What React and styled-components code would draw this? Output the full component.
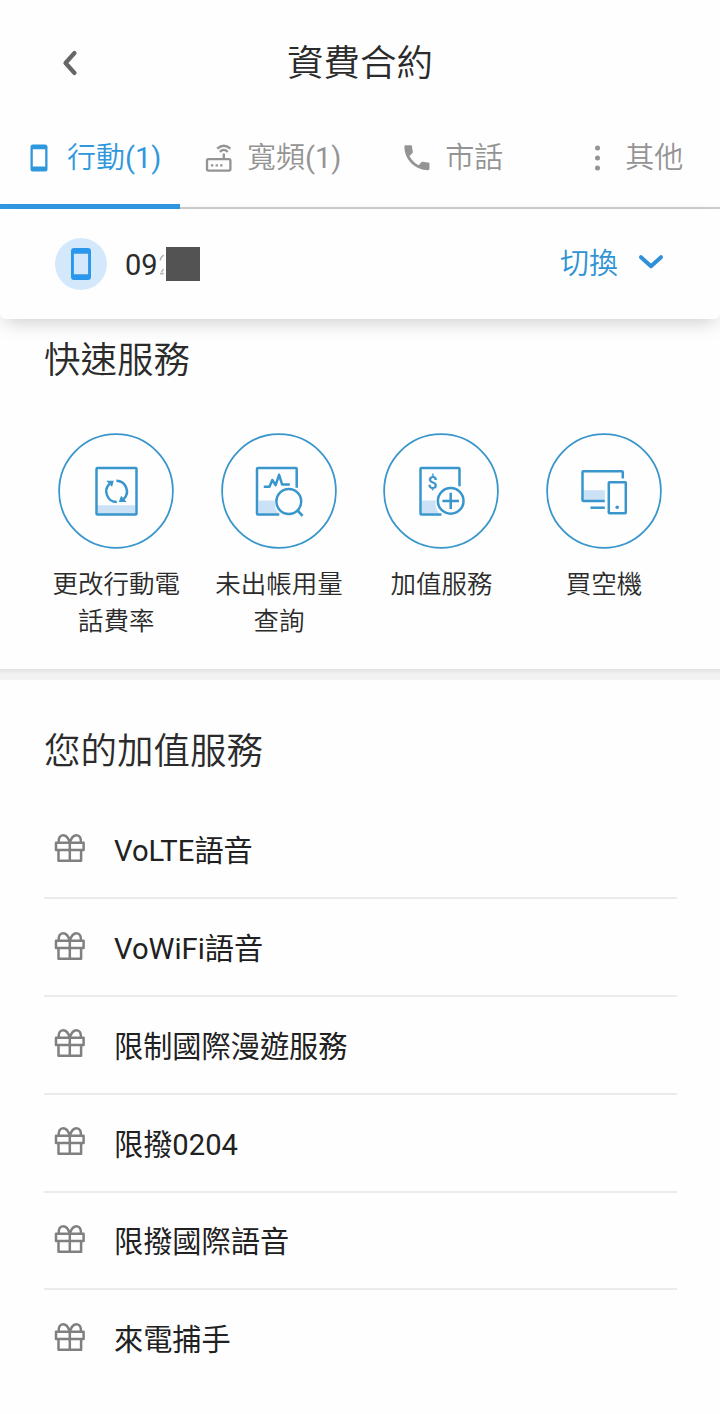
import React, { useState } from "react";
import styled, { createGlobalStyle } from "styled-components";

const GlobalStyle = createGlobalStyle`
  * {
    box-sizing: border-box;
  }

  body {
    margin: 0;
    background: #fefefe;
    color: #2b2b2b;
    font-family: Roboto, "Noto Sans CJK TC", sans-serif;
  }

  button {
    margin: 0;
    padding: 0;
    border: none;
    background: none;
    color: inherit;
    font: inherit;
  }

  svg {
    display: block;
    flex: none;
  }
`;

const Page = styled.div`
  width: 720px;
  height: 1414px;
  overflow: hidden;
`;

const Header = styled.header`
  display: grid;
  grid-template-columns: 140px 1fr 140px;
  align-items: center;
  height: 126px;
`;

const BackButton = styled.button`
  display: flex;
  justify-content: center;
`;

const Title = styled.h1`
  margin: 0;
  padding-top: 2px;
  font-size: 36.5px;
  font-weight: 350;
  line-height: 54px;
  text-align: center;
`;

const Tabs = styled.nav`
  display: flex;
  height: 83px;
  border-bottom: 2px solid #cecece;
`;

const Tab = styled.button`
  display: flex;
  align-items: center;
  justify-content: center;
  gap: 9.5px;
  width: 180px;
  height: 83px;
  padding: 0 0 15px 1px;
  font-size: 29px;
  font-weight: 350;
  line-height: 40px;
  white-space: nowrap;
  color: ${(props) => (props.$active ? "#2f97dc" : "#949494")};
  border-bottom: 5px solid
    ${(props) => (props.$active ? "#3197e2" : "transparent")};
`;

const Count = styled.span`
  font-weight: 400;
`;

const AccountBar = styled.div`
  position: relative;
  z-index: 1;
  display: flex;
  align-items: center;
  height: 110px;
  padding: 0 55px;
  background: #fefefe;
  border-radius: 0 0 6px 6px;
  box-shadow: 0 7px 20px -5px rgba(0, 0, 0, 0.22);
`;

const Avatar = styled.div`
  display: flex;
  align-items: center;
  justify-content: center;
  width: 52px;
  height: 52px;
  margin-right: 18px;
  border-radius: 50%;
  background: #d3e9fb;
`;

const Number = styled.div`
  display: flex;
  align-items: center;
  padding-top: 2px;
  font-size: 29px;
  line-height: 40px;
`;

const Mask = styled.span`
  width: 34px;
  height: 34px;
  margin-top: -2px;
  background: #535353;
`;

const SwitchButton = styled.button`
  display: flex;
  align-items: center;
  gap: 19px;
  margin-left: auto;
  color: #2f93d4;
  font-size: 29px;
  font-weight: 350;
  line-height: 40px;

  svg {
    margin-top: -4px;
  }
`;

const QuickSection = styled.section`
  height: 350px;
  padding: 15px 35px 0;
`;

const SectionTitle = styled.h2`
  margin: 0 0 0 ${(props) => props.$indent || 0}px;
  font-size: 36.5px;
  font-weight: 350;
  line-height: 54px;
`;

const Actions = styled.div`
  display: grid;
  grid-template-columns: repeat(4, 162.6px);
  margin-top: 45px;
`;

const Action = styled.button`
  display: flex;
  flex-direction: column;
  align-items: center;
`;

const ActionLabel = styled.span`
  width: 132px;
  margin-top: 17px;
  font-size: 25.5px;
  font-weight: 350;
  line-height: 36.6px;
  text-align: center;
`;

const Gap = styled.div`
  height: 11px;
  background: linear-gradient(#e2e2e2, #f1f1f1 5px, #f3f3f3);
`;

const AddedSection = styled.section`
  padding: 45px 43px 0 44px;
`;

const List = styled.ul`
  margin: 22.4px 0 0;
  padding: 0;
  list-style: none;
`;

const Item = styled.li`
  display: flex;
  align-items: center;
  gap: 28px;
  height: 97.8px;
  padding: 4px 0 0 10px;
  color: #212121;
  font-size: 29.2px;
  line-height: 42px;
  border-bottom: 2px solid #ebebeb;

  &:last-child {
    border-bottom-color: transparent;
  }

  svg {
    margin-top: -7px;
  }
`;

const BackIcon = () => (
  <svg width="20" height="28" viewBox="0 0 20 28">
    <path
      d="M14.5 4 5.5 14l9 10"
      fill="none"
      stroke="#666"
      strokeWidth="4.2"
      strokeLinecap="round"
      strokeLinejoin="round"
    />
  </svg>
);

const MobileIcon = () => (
  <svg width="38" height="28" viewBox="0 0 38 28">
    <path
      fill="currentColor"
      fillRule="evenodd"
      d="M13 .5h12a2.5 2.5 0 0 1 2.5 2.5v22a2.5 2.5 0 0 1-2.5 2.5H13a2.5 2.5 0 0 1-2.5-2.5V3A2.5 2.5 0 0 1 13 .5ZM12.8 5.2v17.4h12.4V5.2Z"
    />
  </svg>
);

const RouterIcon = () => (
  <svg
    width="38"
    height="28"
    viewBox="0 0 38 28"
    fill="none"
    stroke="currentColor"
    strokeWidth="2.3"
  >
    <rect x="7" y="15.2" width="23.4" height="11.4" rx="1.5" />
    <path d="M23.8 9.6v5.4M19.8 7.8q4-3.8 8 0M17.2 4.6q6.6-5.8 13.2 0" />
    <path d="M11 21.4h2.3m2.3 0h2.3m2.3 0h2.3" strokeWidth="2.4" />
  </svg>
);

const PhoneIcon = () => (
  <svg width="38" height="33.4" viewBox="-1.6 0 27.3 24">
    <path
      fill="currentColor"
      d="M6.62 10.79c1.44 2.83 3.76 5.14 6.59 6.59l2.2-2.2c.27-.27.67-.36 1.02-.24 1.12.37 2.33.57 3.57.57.55 0 1 .45 1 1V20c0 .55-.45 1-1 1-9.39 0-17-7.61-17-17 0-.55.45-1 1-1h3.5c.55 0 1 .45 1 1 0 1.25.2 2.45.57 3.57.11.35.03.74-.25 1.02l-2.2 2.2z"
    />
  </svg>
);

const MoreIcon = () => (
  <svg width="38" height="28" viewBox="0 0 38 28" fill="currentColor">
    <circle cx="19.5" cy="4" r="2.5" />
    <circle cx="19.5" cy="14" r="2.5" />
    <circle cx="19.5" cy="24" r="2.5" />
  </svg>
);

const AccountIcon = () => (
  <svg width="20" height="32" viewBox="0 0 20 32">
    <path
      fill="#2b97ec"
      fillRule="evenodd"
      d="M3 0h14a3 3 0 0 1 3 3v26a3 3 0 0 1-3 3H3a3 3 0 0 1-3-3V3a3 3 0 0 1 3-3ZM2.9 5.8v20.4h14.2V5.8Z"
    />
  </svg>
);

// edge of the digit that shows beside the mask
const MaskedEdge = () => (
  <svg
    width="8.6"
    height="24"
    viewBox="0 0 8.6 24"
    fill="none"
    stroke="#b5b5b5"
    strokeWidth="1.6"
  >
    <path d="M2.3 7.5q.3-4 3.6-5.3M2.1 20.6h3.6M3.3 19l2.4-2.8" />
  </svg>
);

const ChevronIcon = () => (
  <svg width="28" height="20" viewBox="0 0 28 20">
    <path
      d="M4 5.2 14 14.2l10-9"
      fill="none"
      stroke="#2f90d8"
      strokeWidth="4"
      strokeLinecap="round"
      strokeLinejoin="round"
    />
  </svg>
);

const GiftIcon = () => (
  <svg
    width="32"
    height="30"
    viewBox="0 0 32 30"
    fill="none"
    stroke="#808080"
    strokeWidth="2.5"
    strokeLinejoin="round"
  >
    <rect x="2" y="9.7" width="27.6" height="7.3" />
    <path d="M4.5 17v10.7h22.6V17M15.8 9.7v18" />
    <path d="M15.8 9.7C14.5 5.2 11.9 2.2 9.1 2.2c-3 0-4.8 2.8-4.4 7.3" />
    <path d="M15.8 9.7c1.3-4.5 3.9-7.5 6.7-7.5 3 0 4.8 2.8 4.4 7.3" />
  </svg>
);

// round frame shared by the four quick actions
const RoundIcon = ({ children }) => (
  <svg
    width="116"
    height="116"
    viewBox="-0.5 -0.5 116 116"
    fill="none"
    stroke="#3896cc"
    strokeWidth="2.5"
    strokeLinejoin="round"
  >
    <circle cx="57.5" cy="57.5" r="56.9" strokeWidth="1.8" />
    {children}
  </svg>
);

const RateIcon = () => (
  <RoundIcon>
    <path d="M39 71.7h38v9H39z" fill="#cbe1f5" stroke="none" />
    <rect x="38" y="34.5" width="40" height="46.5" rx="1" />
    <path d="M57.9 47.2a10.7 10.7 0 0 1 7.2 18.4M58.3 68.6a10.7 10.7 0 0 1-7.3-18.3" />
    <path
      d="M47.8 47.2h7.4l-1.6 6.4zM68.2 68.6h-7.9l2.3-6.4z"
      fill="#3896cc"
      stroke="none"
    />
  </RoundIcon>
);

const UsageIcon = () => (
  <RoundIcon>
    <path d="M37 67h17a13.6 13.6 0 0 0 3.4 13H37z" fill="#cbe1f5" stroke="none" />
    <path d="M75.2 54.2V35.5q0-1-1-1H36.5q-1 0-1 1V80q0 1 1 1h21.3" />
    <path d="M42.3 53.3H48l2.8-6.8 3.3 5.2 3.5-10.4L60.6 51h7.7" />
    <circle cx="67.3" cy="68" r="12.4" />
    <path d="m75.8 76.8 5.3 5.6" strokeWidth="2.7" />
  </RoundIcon>
);

const ValueAddedIcon = () => (
  <RoundIcon>
    <path d="M38 67h14.5a14 14 0 0 0 3.4 13H38z" fill="#cbe1f5" stroke="none" />
    <path d="M76 52.7V35.5q0-1-1-1H38q-1 0-1 1V80q0 1 1 1h20" />
    <text
      x="48.9"
      y="55.4"
      fill="#3896cc"
      stroke="none"
      fontFamily="Roboto, sans-serif"
      fontSize="17.5"
      fontWeight="600"
      textAnchor="middle"
    >
      $
    </text>
    <circle cx="67.2" cy="67.4" r="12.8" />
    <path d="M58.9 67.4h16.6M67.2 59.2v16.4" />
  </RoundIcon>
);

const DeviceIcon = () => (
  <RoundIcon>
    <path d="M37 56.7h21.3v10H37z" fill="#cbe1f5" stroke="none" />
    <path d="M76.3 45v-6.3q0-1-1-1H37q-1 0-1 1v27.8q0 1 1 1h21.3" />
    <path d="M44 74.2h14.3" />
    <rect x="62.3" y="48.7" width="17" height="31" rx="0.6" />
    <circle cx="70.7" cy="73.7" r="1.8" fill="#3896cc" stroke="none" />
  </RoundIcon>
);

const tabs = [
  { label: "行動", count: 1, icon: <MobileIcon /> },
  { label: "寬頻", count: 1, icon: <RouterIcon /> },
  { label: "市話", icon: <PhoneIcon /> },
  { label: "其他", icon: <MoreIcon /> },
];

const actions = [
  { label: "更改行動電話費率", icon: <RateIcon /> },
  { label: "未出帳用量查詢", icon: <UsageIcon /> },
  { label: "加值服務", icon: <ValueAddedIcon /> },
  { label: "買空機", icon: <DeviceIcon /> },
];

const services = [
  "VoLTE語音",
  "VoWiFi語音",
  "限制國際漫遊服務",
  "限撥0204",
  "限撥國際語音",
  "來電捕手",
];

export default function App() {
  const [active, setActive] = useState(0);

  return (
    <Page lang="zh-Hant">
      <GlobalStyle />
      <Header>
        <BackButton aria-label="返回">
          <BackIcon />
        </BackButton>
        <Title>資費合約</Title>
      </Header>

      <Tabs>
        {tabs.map((tab, i) => (
          <Tab
            key={tab.label}
            $active={i === active}
            onClick={() => setActive(i)}
          >
            {tab.icon}
            <span>
              {tab.label}
              {tab.count && <Count>{`(${tab.count})`}</Count>}
            </span>
          </Tab>
        ))}
      </Tabs>

      <AccountBar>
        <Avatar>
          <AccountIcon />
        </Avatar>
        <Number>
          09
          <MaskedEdge />
          <Mask />
        </Number>
        <SwitchButton>
          切換
          <ChevronIcon />
        </SwitchButton>
      </AccountBar>

      <QuickSection>
        <SectionTitle $indent={9}>快速服務</SectionTitle>
        <Actions>
          {actions.map((action) => (
            <Action key={action.label}>
              {action.icon}
              <ActionLabel>{action.label}</ActionLabel>
            </Action>
          ))}
        </Actions>
      </QuickSection>

      <Gap />

      <AddedSection>
        <SectionTitle>您的加值服務</SectionTitle>
        <List>
          {services.map((service) => (
            <Item key={service}>
              <GiftIcon />
              {service}
            </Item>
          ))}
        </List>
      </AddedSection>
    </Page>
  );
}
